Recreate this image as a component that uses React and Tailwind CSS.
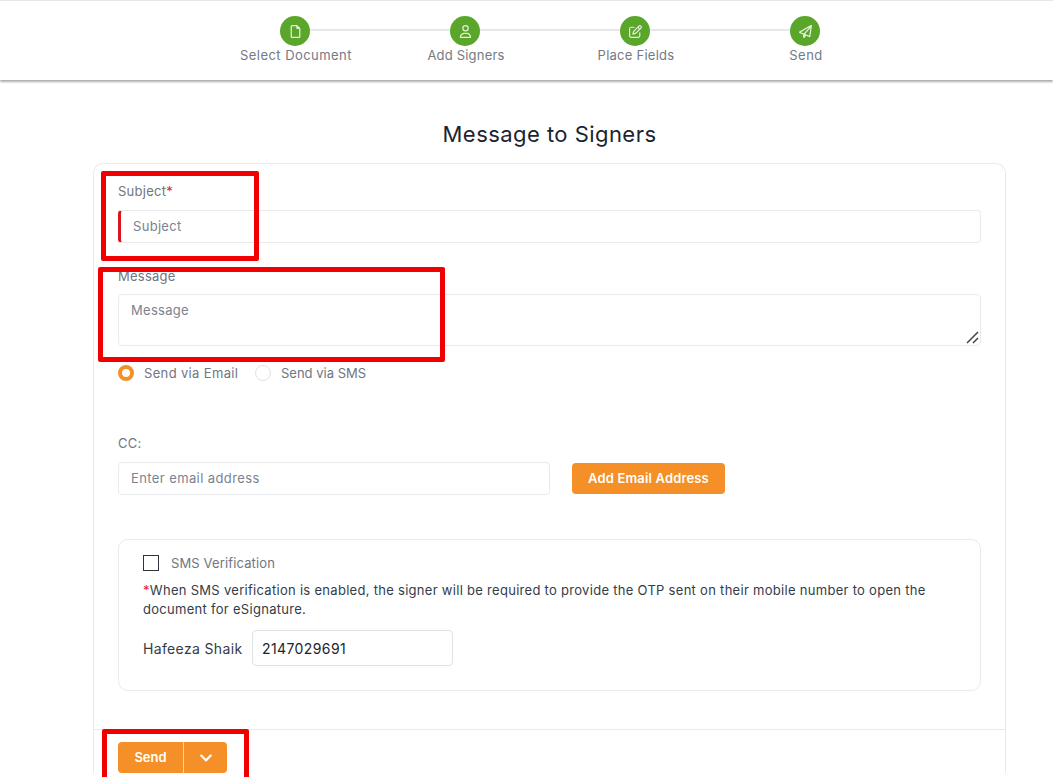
import React from "react";
import { FaRegFile, FaRegUser, FaRegPenToSquare, FaRegPaperPlane } from "react-icons/fa6";
import { FaChevronDown } from "react-icons/fa";

const steps = [
  { label: "Select Document", Icon: FaRegFile, track: "tracking-[0.45px]" },
  { label: "Add Signers", Icon: FaRegUser, track: "tracking-[0.2px]" },
  { label: "Place Fields", Icon: FaRegPenToSquare, track: "tracking-[0.25px]" },
  { label: "Send", Icon: FaRegPaperPlane, track: "tracking-[0.45px]" },
];

function Stepper() {
  return (
    <header className="h-[80px] border-t border-gray-200 bg-white shadow-[0_2px_2px_rgba(0,0,0,0.32)]">
      <div className="ml-[210px] flex w-[680px] pt-[15px]">
        {steps.map(({ label, Icon, track }, i) => (
          <div key={label} className="relative flex w-[170px] flex-col items-center">
            {i < steps.length - 1 && (
              <div className="absolute left-[85px] top-[13px] h-[2px] w-[170px] bg-[#e5e7eb]" />
            )}
            <div className="relative flex h-[30px] w-[30px] items-center justify-center rounded-full bg-[#5aa62a] text-[13px] text-[#e4f1d9]">
              <Icon />
            </div>
            <span className={`translate-x-[1px] whitespace-nowrap text-[13px] leading-[18px] text-[#737a85] ${track}`}>{label}</span>
          </div>
        ))}
      </div>
    </header>
  );
}

function RedBox({ className }) {
  return <div className={`pointer-events-none absolute rounded-[2px] border-[5px] border-[#f00000] ${className}`} />;
}

export default function App() {
  return (
    <div className="relative h-[777px] overflow-hidden bg-white font-['Inter','Noto_Sans',sans-serif] text-[13px] tracking-[0.25px] text-[#6f7682]">
      <Stepper />

      <main className="ml-[93px] w-[913px]">
        <h1 className="mt-[39px] h-[30px] text-center text-[22px] font-normal leading-[30px] tracking-[0.45px] text-[#1b2430]">Message to Signers</h1>

        <div className="mt-[14px] rounded-t-[10px] border border-b-0 border-[#e8eaed]">
          <div className="px-[24px] pt-[17px]">
            <label className="block h-[20px] leading-[20px]">
              Subject<span className="text-[#e11d2e]">*</span>
            </label>
            <input
              placeholder="Subject"
              className="mt-[9px] block h-[33px] w-[863px] rounded-[4px] border border-l-[3px] border-[#e8eaed] border-l-[#d9161f] pb-[2px] pl-[12px] text-[13px] tracking-[0.3px] outline-none placeholder:text-[#7b8290]"
            />

            <label className="mt-[23px] block h-[20px] leading-[20px]">Message</label>
            <div className="relative mt-[8px] h-[52px] w-[863px]">
              <textarea
                placeholder="Message"
                className="block h-[52px] w-[863px] resize-none rounded-[4px] border border-[#e8eaed] px-[12px] py-[6px] text-[13px] tracking-[0.3px] outline-none placeholder:text-[#7b8290]"
              />
              <svg className="absolute bottom-[2px] right-[2px]" width="13" height="13" viewBox="0 0 13 13" fill="none" stroke="#444" strokeWidth="1.5">
                <path d="M1 12 L12 1 M7 12 L12 7" />
              </svg>
            </div>

            <div className="mt-[17px] flex h-[20px] items-center">
              <span className="h-[16px] w-[16px] rounded-full border-[4px] border-[#f58f27] bg-white" />
              <span className="ml-[10px] w-[111px] leading-[20px] tracking-[0.35px]">Send via Email</span>
              <span className="h-[16px] w-[16px] rounded-full border border-[#dfe2e6] bg-white" />
              <span className="ml-[10px] leading-[20px] tracking-normal">Send via SMS</span>
            </div>

            <label className="mt-[50px] block h-[20px] leading-[20px]">CC:</label>
            <div className="mt-[9px] flex items-center">
              <input
                placeholder="Enter email address"
                className="h-[33px] w-[432px] rounded-[4px] border border-[#e8eaed] px-[12px] pb-[2px] text-[13px] tracking-[0.4px] outline-none placeholder:text-[#7b8290]"
              />
              <button className="ml-[22px] h-[31px] w-[153px] rounded-[4px] bg-[#f58f27] text-[13px] font-semibold tracking-[0.15px] text-white">
                Add Email Address
              </button>
            </div>

            <section className="mt-[44px] h-[152px] rounded-[10px] border border-[#e8eaed] px-[24px] pt-[13px]">
              <div className="flex h-[20px] items-center">
                <span className="h-[16px] w-[16px] border border-[#2b3440] bg-white" />
                <span className="ml-[12px] leading-[20px] tracking-[0.13px]">SMS Verification</span>
              </div>
              <p className="mt-[8px] text-[13px] leading-[19px] tracking-[0.29px] text-[#343c48]">
                <span className="text-[#e11d2e]">*</span>When SMS verification is enabled, the signer will be required to provide the OTP sent on their mobile number to open the document for eSignature.
              </p>
              <div className="mt-[11px] flex items-center">
                <span className="w-[109px] text-[14px] tracking-[0.35px] text-[#343c48]">Hafeeza Shaik</span>
                <input
                  defaultValue="2147029691"
                  className="h-[36px] w-[201px] rounded-[4px] border border-[#dfe2e6] px-[9px] text-[14px] tracking-[0.4px] text-[#1b2430] outline-none"
                />
              </div>
            </section>
          </div>

          <div className="mt-[38px] border-t border-[#e8eaed] px-[24px] pt-[12px]">
            <div className="flex h-[31px] w-[109px] overflow-hidden rounded-[4px] bg-[#f58f27] text-white">
              <button className="w-[66px] border-r border-[#fbd3a9] text-[13px] font-semibold tracking-normal">Send</button>
              <button className="flex flex-1 items-center justify-center text-[14px]">
                <FaChevronDown />
              </button>
            </div>
          </div>
        </div>
      </main>

      {/* annotation boxes sitting on top of the form */}
      <RedBox className="left-[101px] top-[171px] h-[90px] w-[158px]" />
      <RedBox className="left-[98px] top-[267px] h-[95px] w-[347px]" />
      <RedBox className="left-[102px] top-[729px] h-[60px] w-[147px]" />
    </div>
  );
}
